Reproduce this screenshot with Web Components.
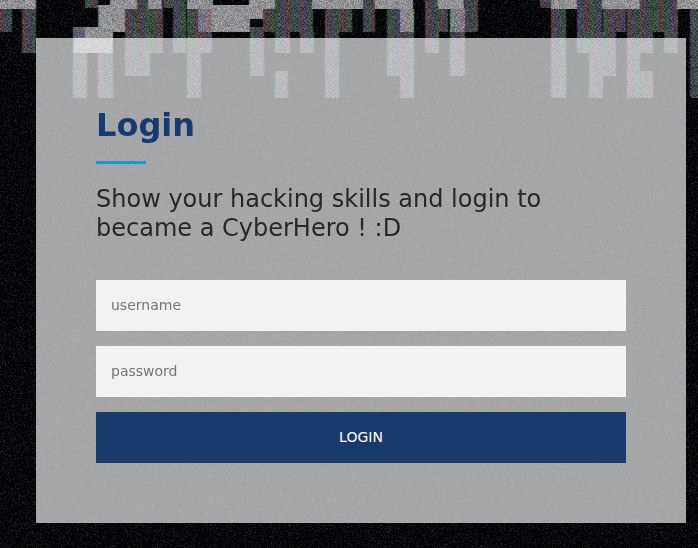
<!DOCTYPE html>
<html lang="en">
<head>
<meta charset="utf-8">
<title>Login</title>
<style>
html, body { margin: 0; height: 100%; overflow: hidden; background: #050608; }
body { font-family: "DejaVu Sans", sans-serif; }
</style>
</head>
<body>
<login-page></login-page>
<script>
/* Grainy terminal wall: solid blocks with dim colour-fringed columns. */
class GlitchBackdrop extends HTMLElement {
  connectedCallback() {
    const root = this.attachShadow({ mode: 'open' });
    root.innerHTML = '<style>:host{display:block;position:absolute;inset:0}canvas{display:block}</style><canvas width="698" height="548"></canvas>';
    this.paint(root.querySelector('canvas'));
  }
  paint(canvas) {
    const W = 698, H = 548, ctx = canvas.getContext('2d');
    const img = ctx.createImageData(W, H);
    const base = new Float32Array(W * H * 3);
    for (let i = 0; i < W * H; i++) { base[i*3] = 3; base[i*3+1] = 4; base[i*3+2] = 7; }
    const tones = { r: [82, 63, 68], g: [58, 77, 63], b: [65, 67, 85] };
    // [left, right, top, bottom, half-column tints, lift]
    const columns = [
      [0,12,9,32,'rbg'],[22,36,9,53,'rbg'],[85,98,0,8,'gr'],[73,87,53,98,'bgr'],[98,113,53,98,'rbg'],
      [125,150,9,76,'rbgrbg'],[137,148,0,32,'rbg'],[148,163,9,53,'gr'],
      [163,173,0,8,'rg'],[173,186,0,53,'bg'],[187,200,9,53,'gr'],[187,201,53,98,'gbr'],[198,212,9,32,'br',50],[199,212,32,53,'rb'],
      [263,276,9,32,'rg'],[275,290,0,53,'gbr'],[275,288,71,98,'gbr'],[290,300,0,32,'gb'],
      [299,313,0,32,'rbg'],[300,314,32,53,'rbg'],[250,264,27,76,'gbr'],[325,339,9,98,'rbg'],[339,352,9,32,'rg'],
      [363,375,0,32,'bgr'],[387,400,9,76,'gb'],[400,414,9,32,'brg',65],[400,414,32,98,'rbg'],
      [425,439,0,53,'rbg'],[439,448,0,32,'rb'],[450,465,9,32,'gbr',55],[450,465,32,76,'br'],
      [465,478,0,32,'bgr'],[540,551,0,8,'rb'],[551,566,9,98,'rbg'],[577,602,0,32,'brgb'],
      [577,589,32,53,'bg'],[589,603,32,98,'grb'],[603,616,9,76,'grb'],[616,626,9,32,'rb'],
      [627,640,9,98,'rbg'],[640,653,0,53,'rbg'],[640,653,71,98,'gbr'],[653,664,0,32,'gr'],
      [664,678,0,53,'gbr'],[690,698,9,98,'bg']
    ];
    for (const [l, r, t, b, tint, lift = 0] of columns)
      for (let y = t; y < b; y++)
        for (let x = l; x < r; x++) {
          const c = tones[tint[Math.floor((x - l) / (r - l) * tint.length)]];
          const weave = (y % 4 < 2) === (x % 4 < 2) ? 11 : -9;
          for (let k = 0; k < 3; k++) base[(y * W + x) * 3 + k] = c[k] + lift + weave;
        }
    const solids = [
      [0,36,0,9],[110,137,0,9],[98,125,5,32],[85,113,27,53],[148,162,0,9],[187,213,0,9],
      [212,250,5,32],[249,275,0,9],[248,263,5,19],[312,363,0,9],[375,413,0,9],[438,464,0,9],
      [551,577,0,9],[602,640,0,9],[677,698,0,9]
    ];
    const fill = (l, r, t, b, c) => {
      for (let y = t; y < b; y++) for (let x = l; x < r; x++)
        for (let k = 0; k < 3; k++) base[(y * W + x) * 3 + k] = c[k];
    };
    fill(73, 86, 27, 38, [98, 98, 116]);
    fill(73, 86, 38, 53, [143, 144, 152]);
    for (const [l, r, t, b] of solids) {
      fill(l, r, t, b, [145, 145, 148]);
    }
    // soft cyan and amber fringes on exposed block ends
    for (const [l, r, t, b] of [[98,125,5,27],[73,113,38,53]]) {
      fill(l, l + 1, t, b, [80, 122, 142]);
      if (r === 113) fill(r - 1, r, t, b, [138, 128, 95]);
    }
    let seed = 48271;
    const rnd = () => (seed = seed * 16807 % 2147483647) / 2147483647;
    for (let y = 0; y < H; y++) for (let x = 0; x < W; x++) {
      const i = y * W + x, q = base[i * 3 + 1];
      const n = q < 30 ? Math.pow(rnd(), 4) * 34 - 3 : (rnd() + rnd() - 1) * (q > 110 ? 42 : 36);
      for (let k = 0; k < 3; k++) {
        const left = base[(i - (x > 0 ? 1 : 0)) * 3 + k];
        const right = base[(i + (x < W - 1 ? 1 : 0)) * 3 + k];
        const v = base[i * 3 + k] * .6 + left * .2 + right * .2;
        img.data[i * 4 + k] = v + n + (rnd() - .5) * 7;
      }
      img.data[i * 4 + 3] = 255;
    }
    ctx.putImageData(img, 0, 0);
  }
}

class LoginTitle extends HTMLElement {
  connectedCallback() {
    this.attachShadow({ mode: 'open' }).innerHTML = `
      <style>
        :host { display: block; margin-bottom: 21px; }
        h2 { margin: 0; padding-bottom: 17px; font-size: 32px; line-height: 38px; font-weight: 700; color: #173b6c; }
        i { display: block; width: 50px; height: 3px; background: #149ddd; }
      </style><h2><slot></slot></h2><i></i>`;
  }
}

class LoginField extends HTMLElement {
  connectedCallback() {
    const type = this.getAttribute('type') || 'text';
    this.attachShadow({ mode: 'open' }).innerHTML = `
      <style>
        :host { display: block; height: 51px; }
        input { display: block; box-sizing: border-box; width: 100%; height: 100%; margin: 0; padding: 0 15px 2px;
          border: 0; border-radius: 0; outline: 0; background: #f2f2f2; font: 14px "DejaVu Sans", sans-serif; color: #272829; }
        input::placeholder { color: #757575; opacity: 1; }
      </style><input type="${type}" placeholder="${this.getAttribute('label')}">`;
  }
}

class LoginButton extends HTMLElement {
  connectedCallback() {
    this.attachShadow({ mode: 'open' }).innerHTML = `
      <style>
        :host { display: block; height: 51px; }
        button { box-sizing: border-box; width: 100%; height: 100%; margin: 0; padding: 0 0 2px; border: 0; background: #173b6c;
          color: #fff; font: 14px "DejaVu Sans", sans-serif; cursor: pointer; }
      </style><button type="button"><slot></slot></button>`;
  }
}

class LoginPage extends HTMLElement {
  connectedCallback() {
    this.attachShadow({ mode: 'open' }).innerHTML = `
      <style>
        :host { display: block; position: relative; box-sizing: border-box; width: 698px; height: 548px; padding: 38px 12px 25px 36px; }
        main { position: relative; box-sizing: border-box; height: 485px; padding: 68px 60px 60px; background: rgba(251,252,253,.65); }
        p { margin: 0 0 37px; font-size: 24px; line-height: 29px; color: #272829; }
        form { display: grid; gap: 15px; }
      </style>
      <glitch-backdrop></glitch-backdrop>
      <main>
        <login-title>Login</login-title>
        <p>Show your hacking skills and login to became a CyberHero ! :D</p>
        <form>
          <login-field label="username"></login-field>
          <login-field label="password" type="password"></login-field>
          <login-button>LOGIN</login-button>
        </form>
      </main>`;
  }
}
customElements.define('glitch-backdrop', GlitchBackdrop);
customElements.define('login-title', LoginTitle);
customElements.define('login-field', LoginField);
customElements.define('login-button', LoginButton);
customElements.define('login-page', LoginPage);
</script>
</body>
</html>
